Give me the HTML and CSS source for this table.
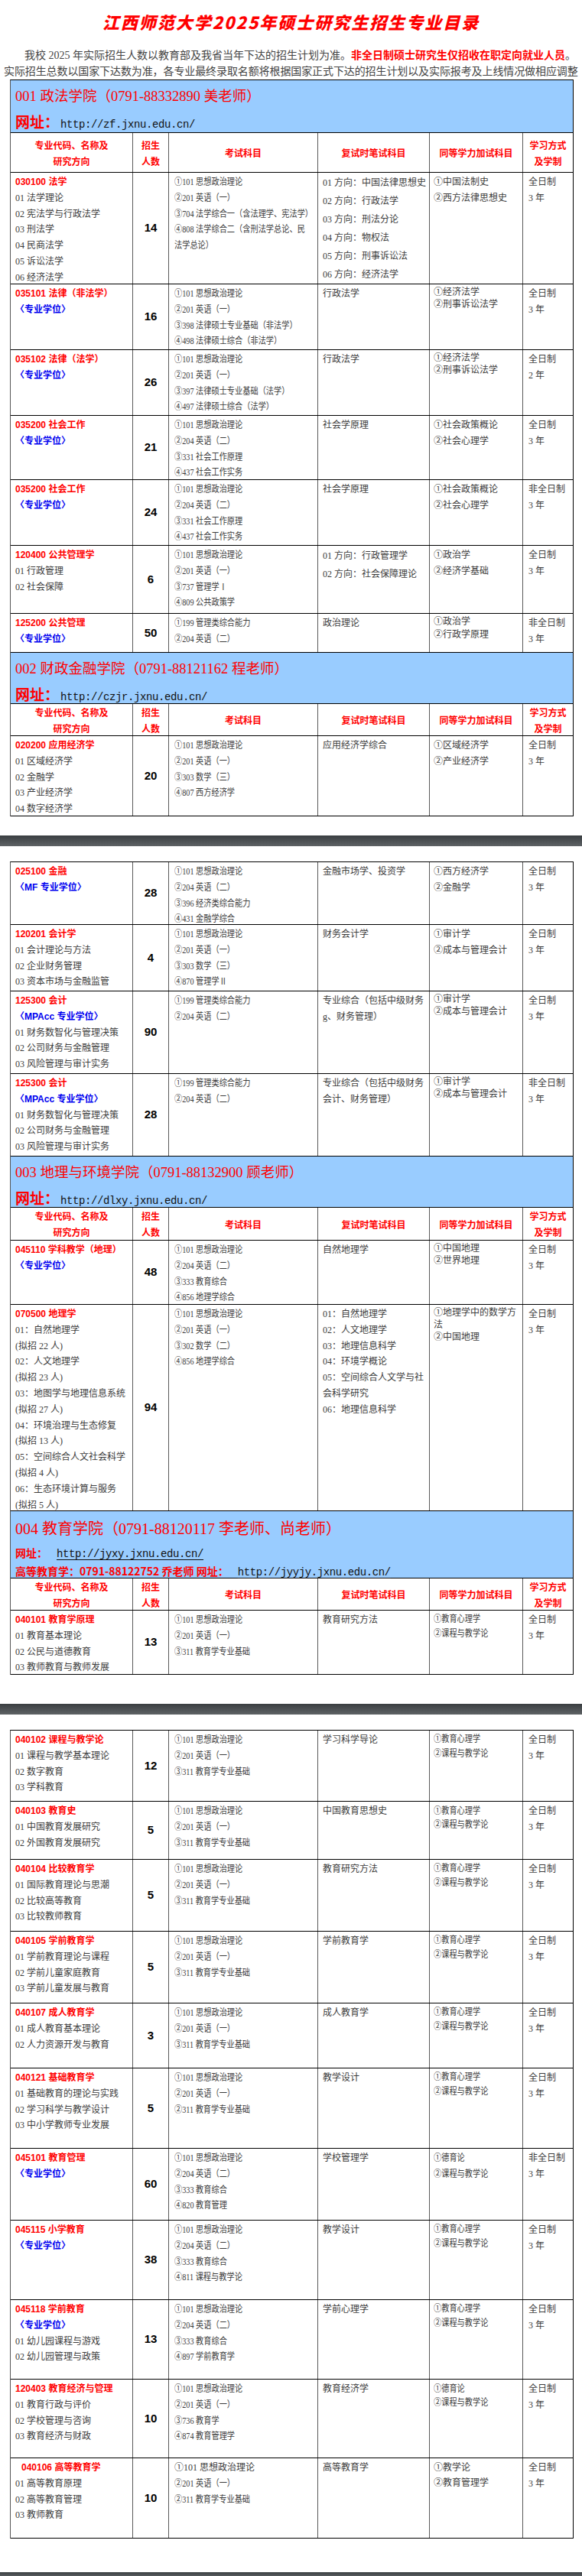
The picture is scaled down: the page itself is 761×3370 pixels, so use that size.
FILE: index.html
```html
<!DOCTYPE html>
<html lang="zh-CN">
<head>
<meta charset="utf-8">
<title>江西师范大学2025年硕士研究生招生专业目录</title>
<link rel="stylesheet" href="styles.css">
</head>
<body>
<h1 class="title">江西师范大学2025年硕士研究生招生专业目录</h1>
<div class="intro">
  <p class="l1">我校 2025 年实际招生人数以教育部及我省当年下达的招生计划为准。<span class="hl">非全日制硕士研究生仅招收在职定向就业人员</span>。</p>
  <p class="l2">实际招生总数以国家下达数为准，各专业最终录取名额将根据国家正式下达的招生计划以及实际报考及上线情况做相应调整</p>
</div>

<div class="tbl">
  <div class="sec h69">
    <p class="stitle">001 政法学院（0791-88332890 美老师）</p>
    <p class="web"><b>网址：</b><span class="url">http://zf.jxnu.edu.cn/</span></p>
  </div>
  <div class="row hd h52">
    <div>专业代码、名称及<br>研究方向</div><div>招生<br>人数</div><div>考试科目</div><div>复试时笔试科目</div><div>同等学力加试科目</div><div>学习方式<br>及学制</div>
  </div>
  <div class="row h146">
    <div class="c1"><p class="r">030100 法学</p><p>01 法学理论</p><p>02 宪法学与行政法学</p><p>03 刑法学</p><p>04 民商法学</p><p>05 诉讼法学</p><p>06 经济法学</p></div>
    <div class="num">14</div>
    <div class="c3"><p>①101 思想政治理论</p><p>②201 英语（一）</p><p>③704 法学综合一（含法理学、宪法学）</p><p>④808 法学综合二（含刑法学总论、民</p><p>法学总论）</p></div>
    <div class="c4 lh24"><p>01 方向：中国法律思想史</p><p>02 方向：行政法学</p><p>03 方向：刑法分论</p><p>04 方向：物权法</p><p>05 方向：刑事诉讼法</p><p>06 方向：经济法学</p></div>
    <div class="c5"><p>①中国法制史</p><p>②西方法律思想史</p></div>
    <div class="c6"><p>全日制</p><p>3 年</p></div>
  </div>
  <div class="row h86">
    <div class="c1"><p class="r">035101 法律（非法学）</p><p class="b">〈专业学位〉</p></div>
    <div class="num">16</div>
    <div class="c3"><p>①101 思想政治理论</p><p>②201 英语（一）</p><p>③398 法律硕士专业基础（非法学）</p><p>④498 法律硕士综合（非法学）</p></div>
    <div class="c4"><p>行政法学</p></div>
    <div class="c5 t16"><p>①经济法学</p><p>②刑事诉讼法学</p></div>
    <div class="c6"><p>全日制</p><p>3 年</p></div>
  </div>
  <div class="row h86">
    <div class="c1"><p class="r">035102 法律（法学）</p><p class="b">〈专业学位〉</p></div>
    <div class="num">26</div>
    <div class="c3"><p>①101 思想政治理论</p><p>②201 英语（一）</p><p>③397 法律硕士专业基础（法学）</p><p>④497 法律硕士综合（法学）</p></div>
    <div class="c4"><p>行政法学</p></div>
    <div class="c5 t16"><p>①经济法学</p><p>②刑事诉讼法学</p></div>
    <div class="c6"><p>全日制</p><p>2 年</p></div>
  </div>
  <div class="row h84">
    <div class="c1"><p class="r">035200 社会工作</p><p class="b">〈专业学位〉</p></div>
    <div class="num">21</div>
    <div class="c3"><p>①101 思想政治理论</p><p>②204 英语（二）</p><p>③331 社会工作原理</p><p>④437 社会工作实务</p></div>
    <div class="c4"><p>社会学原理</p></div>
    <div class="c5"><p>①社会政策概论</p><p>②社会心理学</p></div>
    <div class="c6"><p>全日制</p><p>3 年</p></div>
  </div>
  <div class="row h86">
    <div class="c1"><p class="r">035200 社会工作</p><p class="b">〈专业学位〉</p></div>
    <div class="num">24</div>
    <div class="c3"><p>①101 思想政治理论</p><p>②204 英语（二）</p><p>③331 社会工作原理</p><p>④437 社会工作实务</p></div>
    <div class="c4"><p>社会学原理</p></div>
    <div class="c5"><p>①社会政策概论</p><p>②社会心理学</p></div>
    <div class="c6"><p>非全日制</p><p>3 年</p></div>
  </div>
  <div class="row h89">
    <div class="c1"><p class="r">120400 公共管理学</p><p>01 行政管理</p><p>02 社会保障</p></div>
    <div class="num">6</div>
    <div class="c3"><p>①101 思想政治理论</p><p>②201 英语（一）</p><p>③737 管理学Ⅰ</p><p>④809 公共政策学</p></div>
    <div class="c4 lh24"><p>01 方向：行政管理学</p><p>02 方向：社会保障理论</p></div>
    <div class="c5"><p>①政治学</p><p>②经济学基础</p></div>
    <div class="c6"><p>全日制</p><p>3 年</p></div>
  </div>
  <div class="row h51">
    <div class="c1"><p class="r">125200 公共管理</p><p class="b">〈专业学位〉</p></div>
    <div class="num">50</div>
    <div class="c3"><p>①199 管理类综合能力</p><p>②204 英语（二）</p></div>
    <div class="c4"><p>政治理论</p></div>
    <div class="c5 t17"><p>①政治学</p><p>②行政学原理</p></div>
    <div class="c6"><p>非全日制</p><p>3 年</p></div>
  </div>
  <div class="sec h67">
    <p class="stitle">002 财政金融学院（0791-88121162 程老师）</p>
    <p class="web"><b>网址：</b><span class="url">http://czjr.jxnu.edu.cn/</span></p>
  </div>
  <div class="row hd h42">
    <div>专业代码、名称及<br>研究方向</div><div>招生<br>人数</div><div>考试科目</div><div>复试时笔试科目</div><div>同等学力加试科目</div><div>学习方式<br>及学制</div>
  </div>
  <div class="row h105">
    <div class="c1"><p class="r">020200 应用经济学</p><p>01 区域经济学</p><p>02 金融学</p><p>03 产业经济学</p><p>04 数字经济学</p></div>
    <div class="num">20</div>
    <div class="c3"><p>①101 思想政治理论</p><p>②201 英语（一）</p><p>③303 数学（三）</p><p>④807 西方经济学</p></div>
    <div class="c4"><p>应用经济学综合</p></div>
    <div class="c5"><p>①区域经济学</p><p>②产业经济学</p></div>
    <div class="c6"><p>全日制</p><p>3 年</p></div>
  </div>
</div>

<div class="band"></div>

<div class="tbl t2">
  <div class="row h82">
    <div class="c1"><p class="r">025100 金融</p><p class="b">〈MF 专业学位〉</p></div>
    <div class="num">28</div>
    <div class="c3"><p>①101 思想政治理论</p><p>②204 英语（二）</p><p>③396 经济类综合能力</p><p>④431 金融学综合</p></div>
    <div class="c4"><p>金融市场学、投资学</p></div>
    <div class="c5"><p>①西方经济学</p><p>②金融学</p></div>
    <div class="c6"><p>全日制</p><p>3 年</p></div>
  </div>
  <div class="row h87">
    <div class="c1"><p class="r">120201 会计学</p><p>01 会计理论与方法</p><p>02 企业财务管理</p><p>03 资本市场与金融监管</p></div>
    <div class="num">4</div>
    <div class="c3"><p>①101 思想政治理论</p><p>②201 英语（一）</p><p>③303 数学（三）</p><p>④870 管理学Ⅱ</p></div>
    <div class="c4"><p>财务会计学</p></div>
    <div class="c5"><p>①审计学</p><p>②成本与管理会计</p></div>
    <div class="c6"><p>全日制</p><p>3 年</p></div>
  </div>
  <div class="row h108">
    <div class="c1"><p class="r">125300 会计</p><p class="b">〈MPAcc 专业学位〉</p><p>01 财务数智化与管理决策</p><p>02 公司财务与金融管理</p><p>03 风险管理与审计实务</p></div>
    <div class="num">90</div>
    <div class="c3"><p>①199 管理类综合能力</p><p>②204 英语（二）</p></div>
    <div class="c4"><p>专业综合（包括中级财务</p><p>g、财务管理）</p></div>
    <div class="c5 t16"><p>①审计学</p><p>②成本与管理会计</p></div>
    <div class="c6"><p>全日制</p><p>3 年</p></div>
  </div>
  <div class="row h108">
    <div class="c1"><p class="r">125300 会计</p><p class="b">〈MPAcc 专业学位〉</p><p>01 财务数智化与管理决策</p><p>02 公司财务与金融管理</p><p>03 风险管理与审计实务</p></div>
    <div class="num">28</div>
    <div class="c3"><p>①199 管理类综合能力</p><p>②204 英语（二）</p></div>
    <div class="c4"><p>专业综合（包括中级财务</p><p>会计、财务管理）</p></div>
    <div class="c5 t16"><p>①审计学</p><p>②成本与管理会计</p></div>
    <div class="c6"><p>非全日制</p><p>3 年</p></div>
  </div>
  <div class="sec h67">
    <p class="stitle">003 地理与环境学院（0791-88132900 顾老师）</p>
    <p class="web"><b>网址：</b><span class="url">http://dlxy.jxnu.edu.cn/</span></p>
  </div>
  <div class="row hd h43">
    <div>专业代码、名称及<br>研究方向</div><div>招生<br>人数</div><div>考试科目</div><div>复试时笔试科目</div><div>同等学力加试科目</div><div>学习方式<br>及学制</div>
  </div>
  <div class="row h84">
    <div class="c1"><p class="r">045110 学科教学（地理）</p><p class="b">〈专业学位〉</p></div>
    <div class="num">48</div>
    <div class="c3"><p>①101 思想政治理论</p><p>②204 英语（二）</p><p>③333 教育综合</p><p>④856 地理学综合</p></div>
    <div class="c4"><p>自然地理学</p></div>
    <div class="c5 t16"><p>①中国地理</p><p>②世界地理</p></div>
    <div class="c6"><p>全日制</p><p>3 年</p></div>
  </div>
  <div class="row h270">
    <div class="c1"><p class="r">070500 地理学</p><p>01：自然地理学</p><p>(拟招 22 人)</p><p>02：人文地理学</p><p>(拟招 23 人)</p><p>03：地图学与地理信息系统</p><p>(拟招 27 人)</p><p>04：环境治理与生态修复</p><p>(拟招 13 人)</p><p>05：空间综合人文社会科学</p><p>(拟招 4 人)</p><p>06：生态环境计算与服务</p><p>(拟招 5 人)</p></div>
    <div class="num">94</div>
    <div class="c3"><p>①101 思想政治理论</p><p>②201 英语（一）</p><p>③302 数学（二）</p><p>④856 地理学综合</p></div>
    <div class="c4"><p>01：自然地理学</p><p>02：人文地理学</p><p>03：地理信息科学</p><p>04：环境学概论</p><p>05：空间综合人文学与社</p><p>会科学研究</p><p>06：地理信息科学</p></div>
    <div class="c5 t16"><p>①地理学中的数学方</p><p>法</p><p>②中国地理</p></div>
    <div class="c6"><p>全日制</p><p>3 年</p></div>
  </div>
  <div class="sec s4 h88">
    <p class="stitle">004 教育学院（0791-88120117 李老师、尚老师）</p>
    <p class="web"><b>网址：</b><span class="url ul">http://jyxy.jxnu.edu.cn/</span></p>
    <p class="web w2"><b>高等教育学：0791-88122752 乔老师 网址：</b><span class="url ul">http://jyyjy.jxnu.edu.cn/</span></p>
  </div>
  <div class="row hd h42">
    <div>专业代码、名称及<br>研究方向</div><div>招生<br>人数</div><div>考试科目</div><div>复试时笔试科目</div><div>同等学力加试科目</div><div>学习方式<br>及学制</div>
  </div>
  <div class="row h84">
    <div class="c1"><p class="r">040101 教育学原理</p><p>01 教育基本理论</p><p>02 公民与道德教育</p><p>03 教师教育与教师发展</p></div>
    <div class="num">13</div>
    <div class="c3"><p>①101 思想政治理论</p><p>②201 英语（一）</p><p>③311 教育学专业基础</p></div>
    <div class="c4"><p>教育研究方法</p></div>
    <div class="c5 t19 cn"><p>①教育心理学</p><p>②课程与教学论</p></div>
    <div class="c6"><p>全日制</p><p>3 年</p></div>
  </div>
</div>

<div class="band b2"></div>

<div class="tbl t2">
  <div class="row h93">
    <div class="c1"><p class="r">040102 课程与教学论</p><p>01 课程与教学基本理论</p><p>02 数字教育</p><p>03 学科教育</p></div>
    <div class="num">12</div>
    <div class="c3"><p>①101 思想政治理论</p><p>②201 英语（一）</p><p>③311 教育学专业基础</p></div>
    <div class="c4"><p>学习科学导论</p></div>
    <div class="c5 t19 cn"><p>①教育心理学</p><p>②课程与教学论</p></div>
    <div class="c6"><p>全日制</p><p>3 年</p></div>
  </div>
  <div class="row h76">
    <div class="c1"><p class="r">040103 教育史</p><p>01 中国教育发展研究</p><p>02 外国教育发展研究</p></div>
    <div class="num">5</div>
    <div class="c3"><p>①101 思想政治理论</p><p>②201 英语（一）</p><p>③311 教育学专业基础</p></div>
    <div class="c4"><p>中国教育思想史</p></div>
    <div class="c5 t18 cn"><p>①教育心理学</p><p>②课程与教学论</p></div>
    <div class="c6"><p>全日制</p><p>3 年</p></div>
  </div>
  <div class="row h94">
    <div class="c1"><p class="r">040104 比较教育学</p><p>01 国际教育理论与思潮</p><p>02 比较高等教育</p><p>03 比较教师教育</p></div>
    <div class="num">5</div>
    <div class="c3"><p>①101 思想政治理论</p><p>②201 英语（一）</p><p>③311 教育学专业基础</p></div>
    <div class="c4"><p>教育研究方法</p></div>
    <div class="c5 t19 cn"><p>①教育心理学</p><p>②课程与教学论</p></div>
    <div class="c6"><p>全日制</p><p>3 年</p></div>
  </div>
  <div class="row h94">
    <div class="c1"><p class="r">040105 学前教育学</p><p>01 学前教育理论与课程</p><p>02 学前儿童家庭教育</p><p>03 学前儿童发展与教育</p></div>
    <div class="num">5</div>
    <div class="c3"><p>①101 思想政治理论</p><p>②201 英语（一）</p><p>③311 教育学专业基础</p></div>
    <div class="c4"><p>学前教育学</p></div>
    <div class="c5 t19 cn"><p>①教育心理学</p><p>②课程与教学论</p></div>
    <div class="c6"><p>全日制</p><p>3 年</p></div>
  </div>
  <div class="row h85">
    <div class="c1"><p class="r">040107 成人教育学</p><p>01 成人教育基本理论</p><p>02 人力资源开发与教育</p></div>
    <div class="num">3</div>
    <div class="c3"><p>①101 思想政治理论</p><p>②201 英语（一）</p><p>③311 教育学专业基础</p></div>
    <div class="c4"><p>成人教育学</p></div>
    <div class="c5 t19 cn"><p>①教育心理学</p><p>②课程与教学论</p></div>
    <div class="c6"><p>全日制</p><p>3 年</p></div>
  </div>
  <div class="row h105">
    <div class="c1"><p class="r">040121 基础教育学</p><p>01 基础教育的理论与实践</p><p>02 学习科学与教学设计</p><p>03 中小学教师专业发展</p></div>
    <div class="num">5</div>
    <div class="c3"><p>①101 思想政治理论</p><p>②201 英语（一）</p><p>②311 教育学专业基础</p></div>
    <div class="c4"><p>教学设计</p></div>
    <div class="c5 t19 cn"><p>①教育心理学</p><p>②课程与教学论</p></div>
    <div class="c6"><p>全日制</p><p>3 年</p></div>
  </div>
  <div class="row h94">
    <div class="c1"><p class="r">045101 教育管理</p><p class="b">〈专业学位〉</p></div>
    <div class="num">60</div>
    <div class="c3"><p>①101 思想政治理论</p><p>②204 英语（二）</p><p>③333 教育综合</p><p>④820 教育管理</p></div>
    <div class="c4"><p>学校管理学</p></div>
    <div class="c5 cn"><p>①德育论</p><p>②课程与教学论</p></div>
    <div class="c6"><p>非全日制</p><p>3 年</p></div>
  </div>
  <div class="row h104">
    <div class="c1"><p class="r">045115 小学教育</p><p class="b">〈专业学位〉</p></div>
    <div class="num">38</div>
    <div class="c3"><p>①101 思想政治理论</p><p>②204 英语（二）</p><p>③333 教育综合</p><p>④811 课程与教学论</p></div>
    <div class="c4"><p>教学设计</p></div>
    <div class="c5 t19 cn"><p>①教育心理学</p><p>②课程与教学论</p></div>
    <div class="c6"><p>全日制</p><p>3 年</p></div>
  </div>
  <div class="row h104">
    <div class="c1"><p class="r">045118 学前教育</p><p class="b">〈专业学位〉</p><p>01 幼儿园课程与游戏</p><p>02 幼儿园管理与政策</p></div>
    <div class="num">13</div>
    <div class="c3"><p>①101 思想政治理论</p><p>②204 英语（二）</p><p>③333 教育综合</p><p>④897 学前教育学</p></div>
    <div class="c4"><p>学前心理学</p></div>
    <div class="c5 t19 cn"><p>①教育心理学</p><p>②课程与教学论</p></div>
    <div class="c6"><p>全日制</p><p>3 年</p></div>
  </div>
  <div class="row h103">
    <div class="c1"><p class="r">120403 教育经济与管理</p><p>01 教育行政与评价</p><p>02 学校管理与咨询</p><p>03 教育经济与财政</p></div>
    <div class="num">10</div>
    <div class="c3"><p>①101 思想政治理论</p><p>②201 英语（一）</p><p>③736 教育学</p><p>④874 教育管理学</p></div>
    <div class="c4"><p>教育经济学</p></div>
    <div class="c5 t18 cn"><p>①德育论</p><p>②课程与教学论</p></div>
    <div class="c6"><p>全日制</p><p>3 年</p></div>
  </div>
  <div class="row h105">
    <div class="c1"><p class="r ind">040106 高等教育学</p><p>01 高等教育原理</p><p>02 高等教育管理</p><p>03 教师教育</p></div>
    <div class="num">10</div>
    <div class="c3"><p class="wide">①101 思想政治理论</p><p>②201 英语（一）</p><p>②311 教育学专业基础</p></div>
    <div class="c4"><p>高等教育学</p></div>
    <div class="c5 t20"><p>①教学论</p><p>②教育管理学</p></div>
    <div class="c6"><p>全日制</p><p>3 年</p></div>
  </div>
</div>

<div class="band b3"></div>
</body>
</html>
```

FILE: styles.css
```css
html, body {
  margin: 0;
  padding: 0;
  background: #fff;
  overflow-x: hidden;
}
body {
  width: 761px;
  font-family: "Liberation Serif", "Noto Sans CJK SC", serif;
  color: #3c3c3c;
}
p { margin: 0; white-space: nowrap; }

.title {
  margin: 0;
  padding-top: 13px;
  height: 30px;
  line-height: 30px;
  text-align: center;
  color: #f00;
  font-family: "Noto Sans CJK SC", sans-serif;
  font-size: 22px;
  font-weight: 900;
  font-style: italic;
  letter-spacing: 2px;
}

.intro {
  margin-top: 18px;
  font-size: 14px;
  line-height: 21px;
  color: #444;
}
.intro .l1 { padding-left: 32px; }
.intro .l2 { padding-left: 5px; letter-spacing: -0.1px; }
.intro .hl {
  color: #f00;
  font-weight: bold;
  font-family: "Noto Sans CJK SC", sans-serif;
}

.tbl {
  width: 737px;
  margin-left: 13px;
  box-sizing: border-box;
  border-top: 1px solid #000;
  border-left: 1px solid #555;
  border-right: 1px solid #000;
}
.tbl.t2 { margin-top: 20px; }

.row {
  display: grid;
  grid-template-columns: 160px 47px 195px 146px 122px 65px;
  border-bottom: 1px solid #000;
  box-sizing: border-box;
  font-size: 12px;
  line-height: 20.8px;
}
.row > div {
  border-right: 1px solid #5a5a5a;
  box-sizing: border-box;
  padding-top: 2px;
  overflow: hidden;
}
.row > div:last-child { border-right: 0; }

.c1 { padding-left: 6px; }
.c3 { padding-left: 7px; }
.c4 { padding-left: 6px; }
.c5 { padding-left: 5px; }
.c6 { padding-left: 7px; }

.c3 p, .c5.cn p {
  transform: scaleX(0.85);
  transform-origin: 0 50%;
}
.c3 p.wide { transform: none; }

.c4.lh24 { line-height: 24px; padding-top: 1px; }
.c5.t16 { line-height: 16px; }
.c5.t17 { line-height: 17px; }
.c5.t18 { line-height: 18px; padding-top: 3px; }
.c5.t19 { line-height: 19px; padding-top: 2px; }
.c5.t20 { line-height: 20px; }

.r {
  color: #f00;
  font-weight: bold;
  font-family: "Liberation Sans", "Noto Sans CJK SC", sans-serif;
}
.r.ind { padding-left: 8px; }
.b {
  color: #0000f0;
  font-weight: bold;
  font-family: "Liberation Sans", "Noto Sans CJK SC", sans-serif;
}

.row > div.num {
  display: flex;
  align-items: center;
  justify-content: center;
  padding: 0;
  color: #000;
  font-weight: bold;
  font-size: 15px;
  font-family: "Liberation Sans Narrow", "Liberation Sans", sans-serif;
}

.hd > div {
  display: flex;
  align-items: center;
  justify-content: center;
  text-align: center;
  padding: 0 !important;
  color: #f00;
  font-weight: bold;
  font-family: "Noto Sans CJK SC", sans-serif;
  font-size: 12px;
  line-height: 21px;
}

.sec {
  background: #99ccff;
  border-bottom: 1px solid #000;
  box-sizing: border-box;
  padding: 8px 0 0 6px;
  color: #f00;
}
.stitle {
  font-size: 18.5px;
  line-height: 26px;
}
.web {
  margin-top: 7px;
  line-height: 26px;
}
.web b {
  font-family: "Noto Sans CJK SC", sans-serif;
  font-size: 19px;
  font-weight: bold;
  color: #f00;
}
.url {
  font-family: "Liberation Mono", monospace;
  font-size: 14px;
  letter-spacing: -0.4px;
  color: #111;
  margin-left: 2px;
}
.sec.s4 { padding-top: 10px; }
.s4 .stitle { font-size: 20px; }
.s4 .web {
  margin-top: 7px;
  line-height: 22px;
}
.s4 .web.w2 { margin-top: 0; }
.s4 .web b { font-size: 14px; }
.url.ul {
  text-decoration: underline;
  text-underline-offset: 3px;
  margin-left: 12px;
}

.band {
  height: 14px;
  margin-top: 25px;
  background: linear-gradient(#3a3e41, #5e6265);
}
.band.b2 { margin-top: 38px; }
.band.b3 { margin-top: 44px; height: 6px; }

.h42 { height: 42px; }
.h43 { height: 43px; }
.h51 { height: 51px; }
.h52 { height: 52px; }
.h67 { height: 67px; }
.h69 { height: 69px; }
.h76 { height: 76px; }
.h82 { height: 82px; }
.h84 { height: 84px; }
.h85 { height: 85px; }
.h86 { height: 86px; }
.h87 { height: 87px; }
.h88 { height: 88px; }
.h89 { height: 89px; }
.h93 { height: 93px; }
.h94 { height: 94px; }
.h103 { height: 103px; }
.h104 { height: 104px; }
.h105 { height: 105px; }
.h108 { height: 108px; }
.h146 { height: 146px; }
.h270 { height: 270px; }
```
